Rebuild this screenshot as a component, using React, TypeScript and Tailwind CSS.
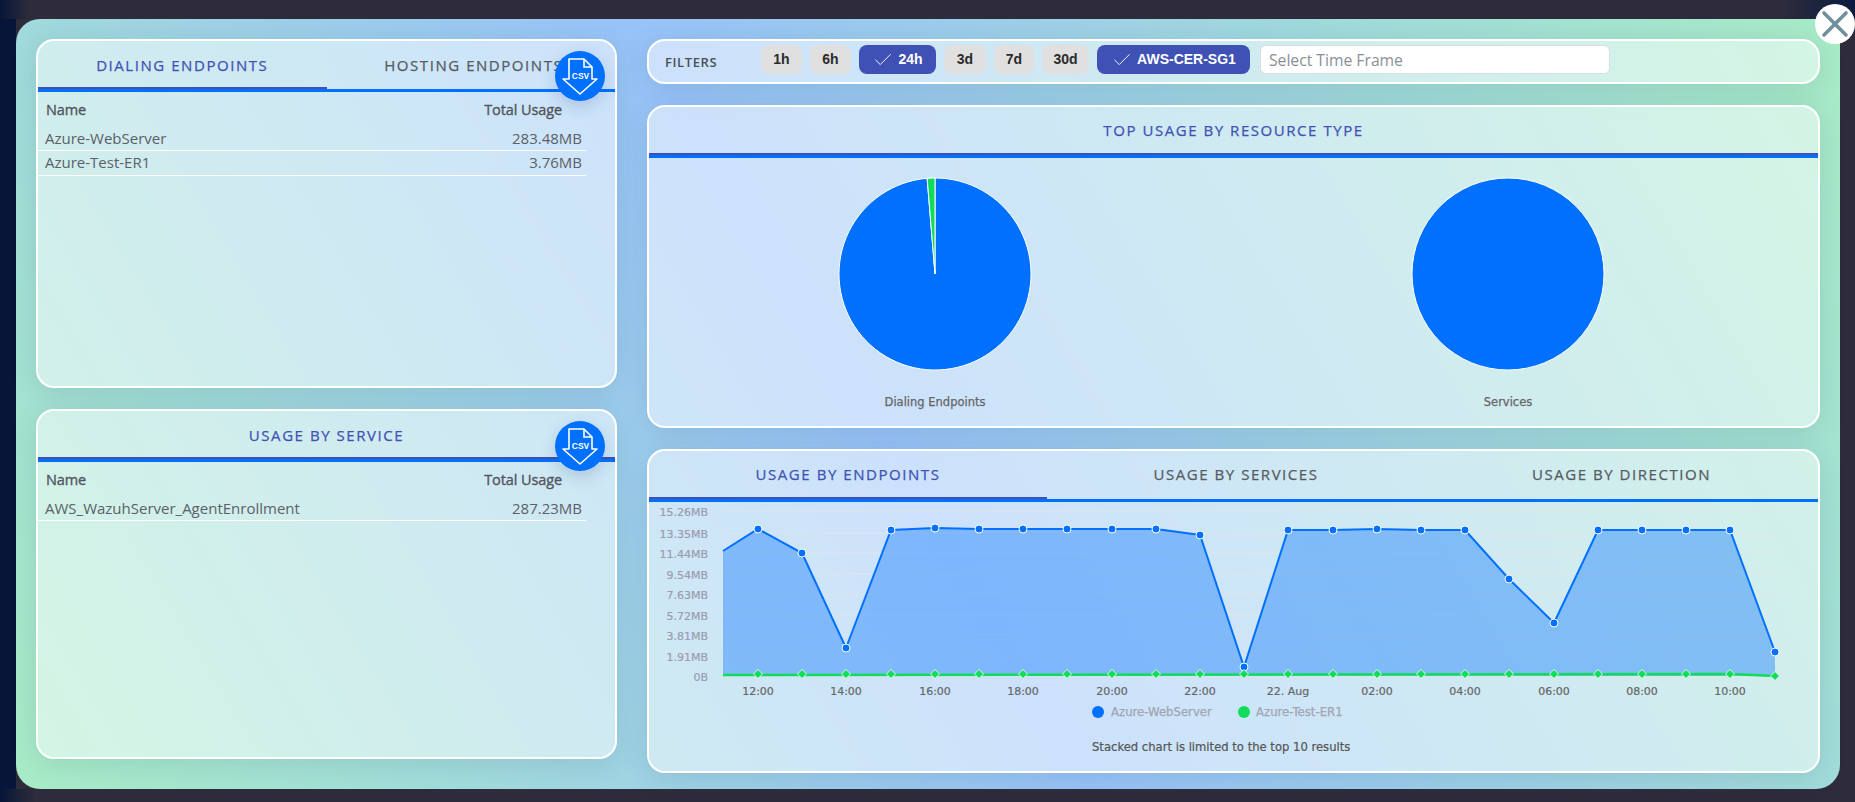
import { Check } from "lucide-react";

const BLUE = "#0070ff";
const GREEN = "#0fdc5a";

const series: [number, number][] = [
  [758, 529], [802, 553], [846, 648], [891, 530], [935, 528], [979, 529],
  [1023, 529], [1067, 529], [1112, 529], [1156, 529], [1200, 535], [1244, 667],
  [1288, 530], [1333, 530], [1377, 529], [1421, 530], [1465, 530], [1509, 579],
  [1554, 623], [1598, 530], [1642, 530], [1686, 530], [1730, 530], [1775, 652],
];

const yLabels: [string, number][] = [
  ["15.26MB", 511], ["13.35MB", 533], ["11.44MB", 553], ["9.54MB", 574], ["7.63MB", 594],
  ["5.72MB", 615], ["3.81MB", 635], ["1.91MB", 656], ["0B", 676],
];

const xLabels: [string, number][] = [
  ["12:00", 758], ["14:00", 846], ["16:00", 935], ["18:00", 1023], ["20:00", 1112], ["22:00", 1200],
  ["22. Aug", 1288], ["02:00", 1377], ["04:00", 1465], ["06:00", 1554], ["08:00", 1642], ["10:00", 1730],
];

const chartFont = { fontFamily: "'DejaVu Sans', sans-serif" };

function CsvButton() {
  return (
    <button className="absolute right-[10px] top-[10px] h-[50px] w-[50px] rounded-full bg-[#0070ff] shadow-[0_6px_16px_rgba(30,60,120,0.18)]">
      <svg viewBox="0 0 50 50" className="h-full w-full">
        <path d="M14 28V8H29L37 16V28H42L25 43L8 28Z" fill="none" stroke="#fff" strokeWidth="1.6" strokeLinejoin="round" />
        <path d="M29 8V16H37" fill="none" stroke="#fff" strokeWidth="1.6" />
        <text x="25.5" y="28" textAnchor="middle" fontSize="8.5" fontWeight="700" fill="#fff" fontFamily="'Liberation Sans', sans-serif">
          CSV
        </text>
      </svg>
    </button>
  );
}

function Rows({ rows }: { rows: [string, string][] }) {
  return (
    <div className="font-['Open_Sans',sans-serif]">
      <div className="flex h-9 items-center pl-2 pr-[53px] text-[14.5px] tracking-[-0.1px] text-[#51555e] [-webkit-text-stroke:0.35px]">
        <span className="flex-1">Name</span>
        <span>Total Usage</span>
      </div>
      {rows.map(([name, usage], i) => (
        <div
          key={name}
          className={`mr-[29px] flex items-center border-b border-white pb-px pl-[7px] pr-[4px] text-[15px] text-[#5c6068] ${i === 0 ? "h-[23px]" : "h-[25px]"}`}
        >
          <span className="flex-1">{name}</span>
          <span>{usage}</span>
        </div>
      ))}
    </div>
  );
}

function TabLabel({ active, children }: { active?: boolean; children: string }) {
  return (
    <span
      className={`font-['Open_Sans',sans-serif] text-[15px] tracking-[1.55px] [-webkit-text-stroke:0.25px] ${active ? "text-[#3f51b5]" : "text-[#555b63]"}`}
    >
      {children}
    </span>
  );
}

function PanelTitle({ children, nudge }: { children: string; nudge?: boolean }) {
  return (
    <div>
      <div className={`flex h-[46px] items-center justify-center ${nudge ? "pt-px" : "pt-[3px]"}`}>
        <TabLabel active>{children}</TabLabel>
      </div>
      <div className="h-[5px] bg-[linear-gradient(#3f51b5_40%,#0070ff_40%)]" />
    </div>
  );
}

function Pie({ label, split }: { label: string; split?: boolean }) {
  const r = 96;
  const a = (4.7 * Math.PI) / 180;
  const sx = 100 - r * Math.sin(a);
  const sy = 100 - r * Math.cos(a);
  return (
    <div className="flex w-[300px] flex-col items-center">
      <svg viewBox="0 0 200 200" className="h-[200px] w-[200px]">
        {split ? (
          <>
            <path d={`M100 100L100 ${100 - r}A${r} ${r} 0 1 1 ${sx} ${sy}Z`} fill={BLUE} stroke="#fff" strokeWidth="1" />
            <path d={`M100 100L${sx} ${sy}A${r} ${r} 0 0 1 100 ${100 - r}Z`} fill={GREEN} stroke="#fff" strokeWidth="1" />
          </>
        ) : (
          <circle cx="100" cy="100" r={r} fill={BLUE} stroke="#fff" strokeWidth="1" />
        )}
      </svg>
      <span className="mt-5 font-['DejaVu_Sans',sans-serif] text-[11.5px] leading-4 text-[#666] [-webkit-text-stroke:0.25px_#666]">
        {label}
      </span>
    </div>
  );
}

function UsageChart() {
  const line = series.map(([x, y]) => `${x} ${y}`).join("L");
  return (
    <svg viewBox="649 502 1169 225" className="block h-[225px] w-[1169px]" style={chartFont}>
      {yLabels.map(([label, y]) => (
        <g key={label}>
          <line x1="723" x2="1783" y1={y} y2={y} stroke="#e6e6e6" strokeOpacity="0.75" />
          <text x="708" y={y + 5} textAnchor="end" fontSize="11" fill="#9a9cb0" stroke="#9a9cb0" strokeWidth="0.2">
            {label}
          </text>
        </g>
      ))}
      <path d={`M723 551L${line}L1775 676L723 676Z`} fill={BLUE} fillOpacity="0.38" />
      {xLabels.map(([label, x]) => (
        <g key={label}>
          <line x1={x} x2={x} y1="676" y2="682" stroke="#dde3ea" />
          <text x={x} y="695" textAnchor="middle" fontSize="11" fill="#666" stroke="#666" strokeWidth="0.2">
            {label}
          </text>
        </g>
      ))}
      <path d={`M723 551L${line}`} fill="none" stroke={BLUE} strokeWidth="2" />
      <path d="M723 675L1730 674L1775 676" fill="none" stroke={GREEN} strokeWidth="2.5" />
      {series.map(([x, y]) => (
        <circle key={x} cx={x} cy={y} r="4" fill={BLUE} stroke="#fff" strokeWidth="1" />
      ))}
      {series.map(([x], i) => {
        const y = i === series.length - 1 ? 676 : 674;
        return <path key={x} d={`M${x} ${y - 4.5}L${x + 4.5} ${y}L${x} ${y + 4.5}L${x - 4.5} ${y}Z`} fill={GREEN} stroke="#fff" strokeWidth="0.8" />;
      })}
      <circle cx="1098" cy="712" r="6" fill={BLUE} />
      <text x="1111" y="716" fontSize="11.7" fill="#a2a4b4" stroke="#a2a4b4" strokeWidth="0.25">
        Azure-WebServer
      </text>
      <circle cx="1244" cy="712" r="6" fill={GREEN} />
      <text x="1256" y="716" fontSize="11.7" fill="#a2a4b4" stroke="#a2a4b4" strokeWidth="0.25">
        Azure-Test-ER1
      </text>
    </svg>
  );
}

function Chip({ label, width, active }: { label: string; width: string; active?: boolean }) {
  return (
    <span
      className={`flex h-[29px] items-center justify-center rounded-lg font-['Liberation_Sans',sans-serif] text-[14px] font-bold ${width} ${
        active ? "gap-1 bg-[#3f51b5] text-white" : "bg-[#e0e0e0] text-[#2b2b2b]"
      }`}
    >
      {active && <Check className="h-[22px] w-[22px]" strokeWidth={1} />}
      {label}
    </span>
  );
}

const panel =
  "relative shrink-0 rounded-[18px] border-2 border-white bg-white/50 shadow-[0_4px_28px_rgba(30,60,80,0.13)]";

export default function App() {
  return (
    <div className="relative h-[802px] w-[1855px] overflow-hidden bg-[#2e2c3a]">
      <div className="absolute inset-y-0 left-0 w-4 bg-[#071538]" />
      <div className="absolute left-0 top-0 h-[19px] w-[30px] bg-gradient-to-r from-[#071538] to-[#2e2c3a]" />
      <div className="absolute bottom-0 left-0 h-[13px] w-[36px] bg-gradient-to-r from-[#071538] to-[#2e2c3a]" />
      <div className="absolute right-0 top-0 h-[19px] w-[75px] bg-gradient-to-l from-[#0a1a40] to-[#2e2c3a]" />

      <div className="pl-4 pt-[19px]">
        <div className="flex h-[770px] w-[1824px] gap-[30px] rounded-[24px] bg-[linear-gradient(59deg,#a8ecc6_0%,#98c3f9_47%,#a8ecc6_100%)] px-5 pb-4 pt-5">
          <div className="flex w-[581px] flex-col gap-[21px]">
            <section className={`${panel} h-[349px]`}>
              <div className="grid h-[51px] grid-cols-2 border-b-[3px] border-[#0070ff]">
                <div className="relative flex items-center justify-center pt-px">
                  <TabLabel active>DIALING ENDPOINTS</TabLabel>
                  <div className="absolute inset-x-0 -bottom-[3px] h-[5px] bg-[linear-gradient(#3f51b5_40%,#0070ff_40%)]" />
                </div>
                <div className="flex items-center justify-center pl-[6px] pt-px">
                  <TabLabel>HOSTING ENDPOINTS</TabLabel>
                </div>
              </div>
              <Rows rows={[["Azure-WebServer", "283.48MB"], ["Azure-Test-ER1", "3.76MB"]]} />
              <CsvButton />
            </section>

            <section className={`${panel} h-[350px]`}>
              <PanelTitle>USAGE BY SERVICE</PanelTitle>
              <Rows rows={[["AWS_WazuhServer_AgentEnrollment", "287.23MB"]]} />
              <CsvButton />
            </section>
          </div>

          <div className="flex flex-1 flex-col gap-[21px]">
            <section className={`${panel} flex h-[45px] items-center pb-1 pl-4`}>
              <span className="mt-[7px] w-[96px] font-['Open_Sans',sans-serif] text-[13px] font-semibold tracking-[0.6px] text-[#4b4f5a]">
                FILTERS
              </span>
              <div className="flex items-center gap-2">
                <Chip label="1h" width="w-[41px]" />
                <Chip label="6h" width="w-[41px]" />
                <Chip label="24h" width="w-[77px]" active />
                <Chip label="3d" width="w-[42px]" />
                <Chip label="7d" width="w-[40px]" />
                <Chip label="30d" width="w-[47px]" />
                <Chip label="AWS-CER-SG1" width="w-[153px]" active />
                <input
                  placeholder="Select Time Frame"
                  className="ml-[2px] h-[29px] w-[350px] rounded-md border border-[#d9dee3] bg-white px-2 font-['Open_Sans',sans-serif] text-[15.7px] placeholder:text-[#8a8f96]"
                />
              </div>
            </section>

            <section className={`${panel} h-[323px]`}>
              <PanelTitle nudge>TOP USAGE BY RESOURCE TYPE</PanelTitle>
              <div className="flex pl-[136px] pt-[16px]">
                <Pie label="Dialing Endpoints" split />
                <div className="w-[273px]" />
                <Pie label="Services" />
              </div>
            </section>

            <section className={`${panel} h-[324px]`}>
              <div className="grid h-[51px] grid-cols-[398px_378px_1fr] border-b-[3px] border-[#0070ff]">
                <div className="relative flex items-center justify-center pb-[2px]">
                  <TabLabel active>USAGE BY ENDPOINTS</TabLabel>
                  <div className="absolute inset-x-0 -bottom-[3px] h-[5px] bg-[linear-gradient(#3f51b5_40%,#0070ff_40%)]" />
                </div>
                <div className="flex items-center justify-center pb-[2px]">
                  <TabLabel>USAGE BY SERVICES</TabLabel>
                </div>
                <div className="flex items-center justify-center pb-[2px]">
                  <TabLabel>USAGE BY DIRECTION</TabLabel>
                </div>
              </div>
              <UsageChart />
              <p className="pl-[443px] pt-[12px] font-['DejaVu_Sans',sans-serif] text-[11.6px] leading-4 text-[#555] [-webkit-text-stroke:0.2px_#555]">
                Stacked chart is limited to the top 10 results
              </p>
            </section>
          </div>
        </div>
      </div>

      <button className="absolute left-[1815px] top-1 h-10 w-10 rounded-full bg-white">
        <svg viewBox="0 0 40 40" className="h-full w-full">
          <path d="M9 9L31 31M31 9L9 31" stroke="#6e8f9b" strokeWidth="3.6" strokeLinecap="round" />
        </svg>
      </button>
    </div>
  );
}
